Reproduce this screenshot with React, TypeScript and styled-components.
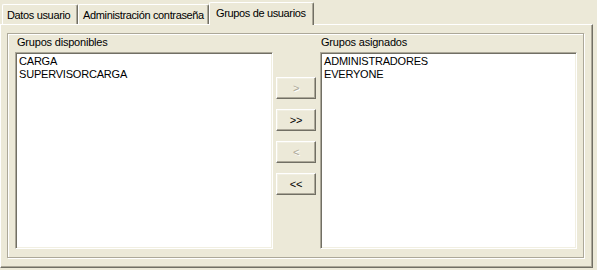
import React from "react";
import styled, { createGlobalStyle } from "styled-components";

const Global = createGlobalStyle`
  html, body { margin: 0; padding: 0; background: #ECE9D8; }
  body { font-family: "Liberation Sans", Arial, sans-serif; font-size: 11px; }
`;

const Window = styled.div`
  width: 597px;
  height: 270px;
  box-sizing: border-box;
  padding-top: 2px;
  background: #ece9d8;
  display: flex;
  flex-direction: column;
  overflow: hidden;
  font-family: "Liberation Sans", Arial, sans-serif;
  font-size: 11px;
  letter-spacing: -0.2px;
  color: #000;
`;

const TabStrip = styled.div`
  display: flex;
  align-items: flex-end;
  height: 22px;
  padding-left: 2px;
  position: relative;
  z-index: 1;
`;

const Tab = styled.div<{ $w: number; $active?: boolean }>`
  box-sizing: border-box;
  width: ${(p) => p.$w}px;
  height: ${(p) => (p.$active ? 23 : 20)}px;
  margin-bottom: ${(p) => (p.$active ? -1 : 0)}px;
  background: #ece9d8;
  border-top: 1px solid #fff;
  border-left: 1px solid #fff;
  border-right: 1px solid #716f64;
  border-radius: 2px 2px 0 0;
  box-shadow: inset -1px 0 0 #aca899;
  display: flex;
  align-items: center;
  padding: ${(p) => (p.$active ? "0 0 3px 6px" : "0 0 0 4px")};
  letter-spacing: -0.35px;
  white-space: nowrap;
  overflow: hidden;
`;

const Panel = styled.div`
  box-sizing: border-box;
  width: 593px;
  height: 244px;
  border-top: 1px solid #fff;
  border-left: 1px solid #fff;
  border-right: 1px solid #716f64;
  border-bottom: 1px solid #716f64;
  box-shadow: inset -1px -1px 0 #aca899;
  padding: 8px 0 0 6px;
`;

const GroupBox = styled.div`
  box-sizing: border-box;
  width: 577px;
  height: 225px;
  border: 1px solid #aca899;
  box-shadow: inset 1px 1px 0 #fff, 1px 1px 0 #fff;
  padding: 1px 0 0 7px;
  display: grid;
  grid-template-columns: 258px 47px 257px;
  grid-template-rows: 14px 197px;
  row-gap: 3px;
`;

const Label = styled.div<{ $pad: number }>`
  padding-left: ${(p) => p.$pad}px;
  line-height: 14px;
`;

const ListBox = styled.div`
  box-sizing: border-box;
  background: #fff;
  border: 1px solid;
  border-color: #aca899 #fff #fff #aca899;
  box-shadow: inset 1px 1px 0 #716f64, inset -1px -1px 0 #f1efe2;
  padding: 2px 3px;
  line-height: 13px;
`;

const ButtonColumn = styled.div`
  grid-row: 2;
  grid-column: 2;
  padding: 25px 0 0 3px;
  display: flex;
  flex-direction: column;
  gap: 10px;
`;

const MoveButton = styled.div<{ $disabled?: boolean }>`
  box-sizing: border-box;
  width: 40px;
  height: 22px;
  background: #ece9d8;
  border: 1px solid;
  border-color: #fff #716f64 #716f64 #fff;
  box-shadow: inset -1px -1px 0 #aca899, inset 1px 1px 0 #f1efe2;
  display: flex;
  align-items: center;
  justify-content: center;
  color: ${(p) => (p.$disabled ? "#aca899" : "#000")};
  text-shadow: ${(p) => (p.$disabled ? "1px 1px 0 #fff" : "none")};
  padding-bottom: 1px;
`;

const Item = styled.div``;

export default function App() {
  return (
    <>
      <Global />
      <Window>
        <TabStrip>
          <Tab $w={76}>Datos usuario</Tab>
          <Tab $w={131}>Administración contraseña</Tab>
          <Tab $w={105} $active>
            Grupos de usuarios
          </Tab>
        </TabStrip>
        <Panel>
          <GroupBox>
            <Label $pad={2}>Grupos disponibles</Label>
            <div />
            <Label $pad={1}>Grupos asignados</Label>
            <ListBox>
              <Item>CARGA</Item>
              <Item>SUPERVISORCARGA</Item>
            </ListBox>
            <ButtonColumn>
              <MoveButton $disabled>&gt;</MoveButton>
              <MoveButton>&gt;&gt;</MoveButton>
              <MoveButton $disabled>&lt;</MoveButton>
              <MoveButton>&lt;&lt;</MoveButton>
            </ButtonColumn>
            <ListBox>
              <Item>ADMINISTRADORES</Item>
              <Item>EVERYONE</Item>
            </ListBox>
          </GroupBox>
        </Panel>
      </Window>
    </>
  );
}
